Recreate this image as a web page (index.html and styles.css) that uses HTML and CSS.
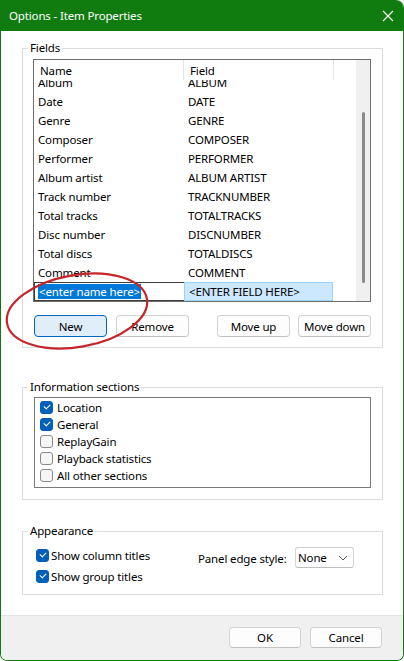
FILE: index.html
```html
<!DOCTYPE html>
<html lang="en">
<head>
    <meta charset="UTF-8">
    <meta name="viewport" content="width=device-width, initial-scale=1.0">
    <title>Options - Item Properties</title>
    <link rel="stylesheet" href="styles.css">
</head>
<body>
    <div class="window">
        <div class="titlebar">
            <span class="title">Options - Item Properties</span>
            <svg class="close" width="12" height="12" viewBox="0 0 12 12">
                <path d="M1 1 L11 11 M11 1 L1 11" stroke="#fff" stroke-width="1.1" fill="none"/>
            </svg>
        </div>

        <div class="content">
            <fieldset class="group">
                <legend>Fields</legend>
                <div class="group-body fields-body">
                    <div class="listview">
                        <div class="lv-main">
                            <div class="lv-header">
                                <div class="lv-head name">Name</div>
                                <div class="lv-head field">Field</div>
                                <div class="lv-head rest"></div>
                            </div>
                            <div class="lv-body">
                                <div class="lv-rows">
                                    <div class="lv-row"><span class="cell name">Album</span><span class="cell field">ALBUM</span></div>
                                    <div class="lv-row"><span class="cell name">Date</span><span class="cell field">DATE</span></div>
                                    <div class="lv-row"><span class="cell name">Genre</span><span class="cell field">GENRE</span></div>
                                    <div class="lv-row"><span class="cell name">Composer</span><span class="cell field">COMPOSER</span></div>
                                    <div class="lv-row"><span class="cell name">Performer</span><span class="cell field">PERFORMER</span></div>
                                    <div class="lv-row"><span class="cell name">Album artist</span><span class="cell field">ALBUM ARTIST</span></div>
                                    <div class="lv-row"><span class="cell name">Track number</span><span class="cell field">TRACKNUMBER</span></div>
                                    <div class="lv-row"><span class="cell name">Total tracks</span><span class="cell field">TOTALTRACKS</span></div>
                                    <div class="lv-row"><span class="cell name">Disc number</span><span class="cell field">DISCNUMBER</span></div>
                                    <div class="lv-row"><span class="cell name">Total discs</span><span class="cell field">TOTALDISCS</span></div>
                                    <div class="lv-row"><span class="cell name">Comment</span><span class="cell field">COMMENT</span></div>
                                    <div class="lv-row editing">
                                        <span class="cell name edit-box"><span class="sel">&lt;enter name here&gt;</span></span>
                                        <span class="cell field edit-field">&lt;ENTER FIELD HERE&gt;</span>
                                    </div>
                                </div>
                            </div>
                        </div>
                        <div class="vscroll"><div class="thumb"></div></div>
                    </div>

                    <div class="btn-row">
                        <div class="btn-group">
                            <button class="btn default">New</button>
                            <button class="btn">Remove</button>
                        </div>
                        <div class="btn-group">
                            <button class="btn">Move up</button>
                            <button class="btn">Move down</button>
                        </div>
                    </div>
                </div>
            </fieldset>

            <fieldset class="group info">
                <legend>Information sections</legend>
                <div class="group-body info-body">
                    <div class="listbox">
                        <label class="check-row"><span class="check on"></span>Location</label>
                        <label class="check-row"><span class="check on"></span>General</label>
                        <label class="check-row"><span class="check"></span>ReplayGain</label>
                        <label class="check-row"><span class="check"></span>Playback statistics</label>
                        <label class="check-row"><span class="check"></span>All other sections</label>
                    </div>
                </div>
            </fieldset>

            <fieldset class="group appearance">
                <legend>Appearance</legend>
                <div class="group-body appearance-body">
                    <div class="opt-col">
                        <label class="opt-row"><span class="check on"></span>Show column titles</label>
                        <label class="opt-row"><span class="check on"></span>Show group titles</label>
                    </div>
                    <span class="edge-label">Panel edge style:</span>
                    <div class="combo">
                        <span>None</span>
                        <svg width="10" height="6" viewBox="0 0 10 6">
                            <path d="M1 1 L5 5 L9 1" stroke="#555" stroke-width="1" fill="none"/>
                        </svg>
                    </div>
                </div>
            </fieldset>
        </div>

        <div class="footer">
            <button class="btn">OK</button>
            <button class="btn">Cancel</button>
        </div>

        <!-- red marker drawn around the New button -->
        <svg class="marker" width="404" height="661" viewBox="0 0 404 661">
            <ellipse cx="77" cy="311" rx="71" ry="36" transform="rotate(-10 77 311)"
                     fill="none" stroke="#c4262c" stroke-width="2.2"/>
        </svg>
    </div>
</body>
</html>
```

FILE: styles.css
```css
* {
    box-sizing: border-box;
}
body {
    margin: 0;
    background: #fff;
    font-family: "Noto Sans", "Open Sans", sans-serif;
    font-size: 11.5px;
    letter-spacing: -0.15px;
    color: #000;
}
.window {
    position: relative;
    width: 404px;
    height: 661px;
    border: 1px solid #107c10;
    border-top: none;
    border-radius: 0 8px 7px 7px;
    display: flex;
    flex-direction: column;
    overflow: hidden;
    background: #fff;
}
.titlebar {
    height: 31px;
    margin: 0 -1px;
    background: #107c10;
    color: #fff;
    display: flex;
    align-items: center;
    justify-content: space-between;
    padding: 0 10px 0 9px;
    border-radius: 0 8px 0 0;
}
.title {
    font-size: 11.5px;
}
.close {
    margin-top: 1px;
}

/* group boxes */
.group {
    margin: 0 20px 0 21px;
    padding: 0;
    border: 1px solid #dcdcdc;
    min-width: 0;
}
.group legend {
    margin-left: 5px;
    padding: 0 2px;
    line-height: 16px;
}
.content {
    padding-top: 9px;
}
.fields-body {
    padding: 3px 11px 10px 10px;
}
.info {
    margin-top: 31px;
}
.info-body {
    padding: 2px 11px 11px 11px;
}
.appearance {
    margin-top: 23px;
}

/* list view */
.listview {
    display: flex;
    height: 243px;
    border: 1px solid #6e6e6e;
}
.lv-main {
    flex: 1;
    display: flex;
    flex-direction: column;
    min-width: 0;
}
.lv-header {
    display: flex;
    height: 20px;
    flex-shrink: 0;
    background: #fff;
}
.lv-head {
    line-height: 18px;
    padding-top: 2px;
    border-right: 1px solid #e5e5e5;
}
.lv-head.name {
    width: 150px;
    padding-left: 6px;
}
.lv-head.field {
    width: 150px;
    padding-left: 6px;
}
.lv-head.rest {
    flex: 1;
    border-right: none;
}
.lv-body {
    flex: 1;
    overflow: hidden;
}
.lv-rows {
    margin-top: -7px;
}
.lv-row {
    display: flex;
    height: 19px;
    line-height: 19px;
}
.cell {
    white-space: nowrap;
}
.cell.name {
    width: 150px;
    padding-left: 4px;
}
.cell.field {
    width: 149px;
    padding-left: 4px;
}
.edit-box {
    border: 1px solid #3c3c3c;
    border-right: none;
    padding-left: 3px !important;
    line-height: 17px;
}
.sel {
    display: inline-block;
    background: #0078d7;
    color: #fff;
    padding: 0 1px;
    line-height: 15px;
    margin-top: 1px;
}
.edit-field {
    background: #cce8ff;
    border: 1px solid #99d1ff;
    line-height: 17px;
}
.vscroll {
    width: 14px;
    background: #f0f0f0;
    padding-top: 52px;
}
.thumb {
    width: 3px;
    height: 171px;
    margin-left: 6px;
    background: #8a8a8a;
    border-radius: 2px;
}

/* buttons */
.btn-row {
    display: flex;
    justify-content: space-between;
    margin-top: 13px;
    padding-left: 1px;
}
.btn-group {
    display: flex;
    gap: 9px;
}
.btn-group + .btn-group {
    gap: 8px;
}
.btn {
    width: 73px;
    height: 22px;
    padding: 0;
    font-family: inherit;
    font-size: 11.5px;
    letter-spacing: -0.15px;
    color: #000;
    background: #fdfdfd;
    border: 1px solid #d3d3d3;
    border-bottom-color: #c2c2c2;
    border-radius: 4px;
}
.btn.default {
    background: #e0eef9;
    border-color: #0067c0;
}

/* checkbox list */
.listbox {
    height: 91px;
    border: 1px solid #7a7a7a;
    padding: 1px 0 0 5px;
}
.check-row {
    display: flex;
    align-items: center;
    height: 17px;
}
.check {
    width: 13px;
    height: 13px;
    border: 1px solid #8a8a8a;
    border-radius: 3px;
    background: #f6f6f6;
    margin-right: 4px;
    flex-shrink: 0;
    position: relative;
}
.check.on {
    background: #005fb8;
    border-color: #005fb8;
}
.check.on::after {
    content: "";
    position: absolute;
    left: 3px;
    top: 2px;
    width: 5px;
    height: 3px;
    border-left: 1px solid #fff;
    border-bottom: 1px solid #fff;
    transform: rotate(-45deg);
}

/* appearance */
.appearance-body {
    display: grid;
    grid-template-columns: 162px 97px 59px;
    align-items: start;
    padding: 6px 0 7px 13px;
}
.opt-row {
    display: flex;
    align-items: center;
    height: 21px;
}
.opt-row .check {
    margin-right: 2px;
}
.edge-label {
    line-height: 20px;
    margin-top: 4px;
}
.combo {
    height: 21px;
    margin-top: 2px;
    border: 1px solid #d3d3d3;
    border-bottom-color: #bdbdbd;
    border-radius: 3px;
    display: flex;
    align-items: center;
    justify-content: space-between;
    padding: 0 5px 0 2px;
}

/* footer */
.footer {
    margin-top: auto;
    height: 45px;
    border-top: 1px solid #e3e3e3;
    background: #f0f0f0;
    display: flex;
    justify-content: flex-end;
    gap: 9px;
    padding: 11px 21px 0 0;
}
.footer .btn {
    width: 72px;
    height: 21px;
}

.marker {
    position: absolute;
    left: -1px;
    top: 0;
    pointer-events: none;
}
```
